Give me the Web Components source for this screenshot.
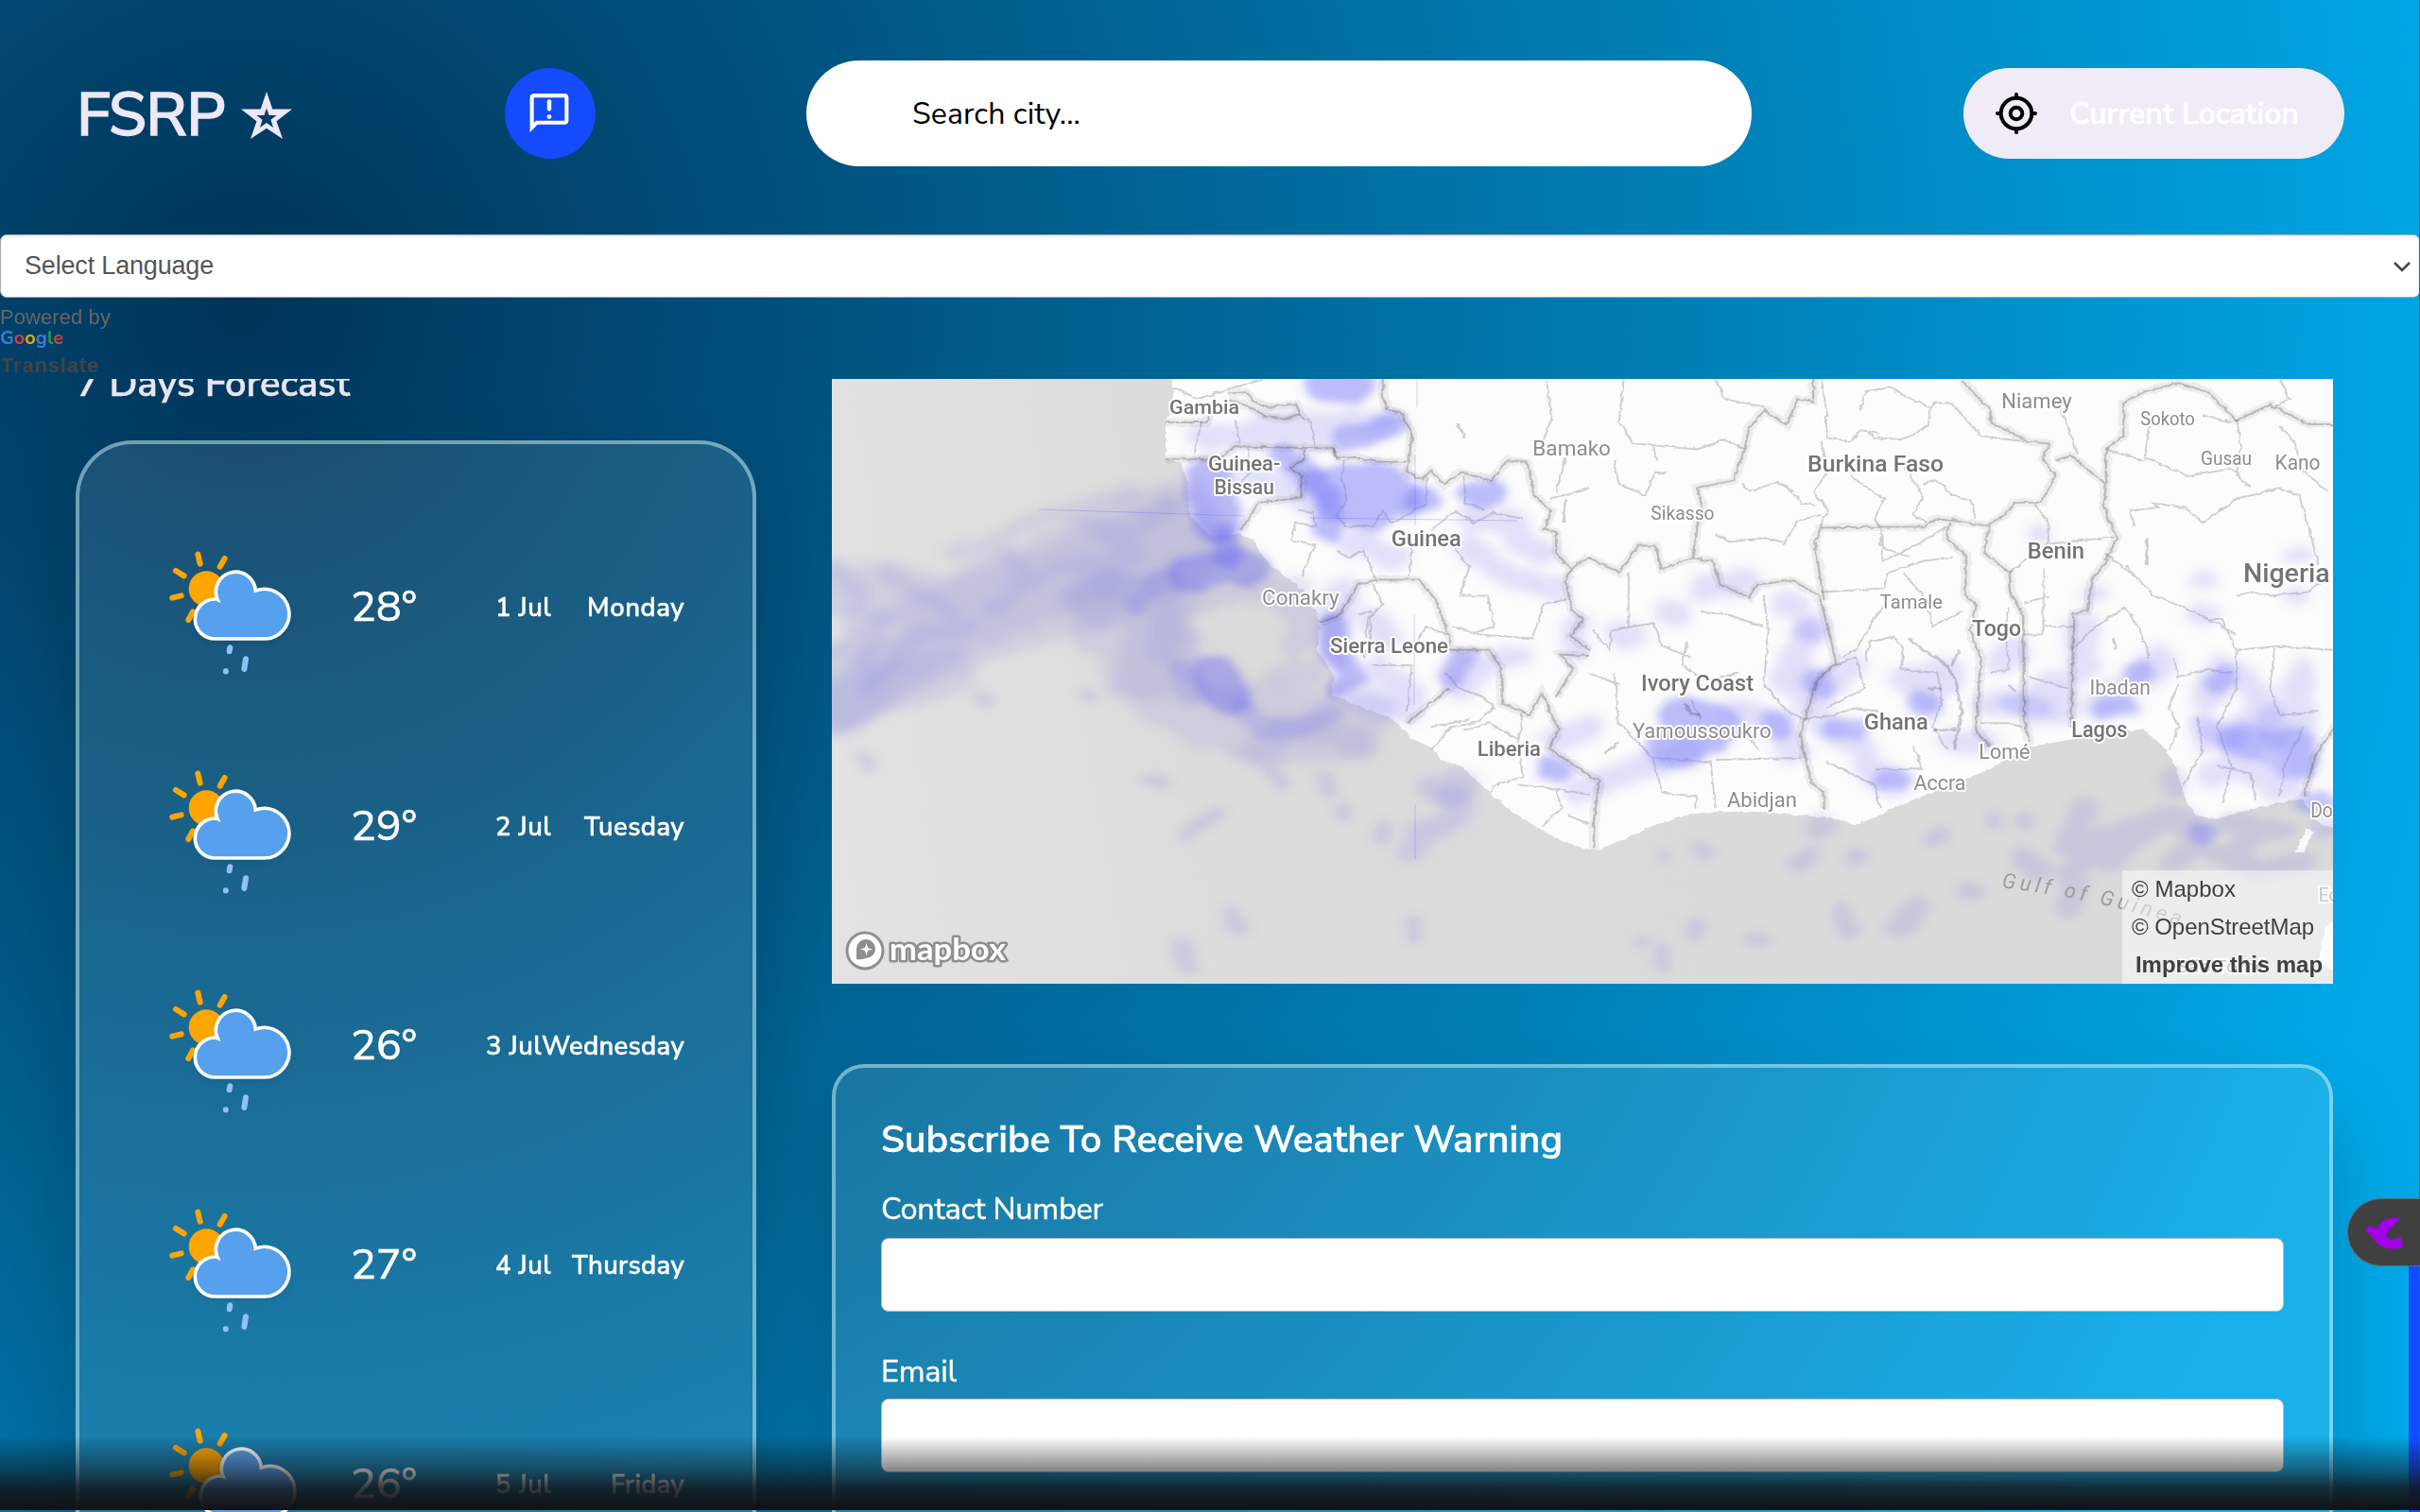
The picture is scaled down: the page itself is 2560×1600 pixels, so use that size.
<!DOCTYPE html>
<html lang="en">
<head>
<meta charset="utf-8">
<title>FSRP Weather</title>
<style>
html,body{margin:0;height:1600px;overflow:hidden}
body{font-family:"Nunito Sans",Nunito,Lato,sans-serif;color:#fff}
</style>
</head>
<body>
<weather-app></weather-app>
<script>
const define=(name,html,setup)=>customElements.define(name,class extends HTMLElement{
  constructor(){super();this.attachShadow({mode:'open'});}
  connectedCallback(){this.shadowRoot.innerHTML=typeof html==='function'?html(this):html;if(setup)setup(this);}
});

/* One line of text tracked out (or in) to a set width */
define('fit-text','<style>:host{display:inline-block;white-space:nowrap}span{display:inline-block}</style><span><slot></slot></span>',el=>{
  const w=+el.getAttribute('w'),s=el.shadowRoot.querySelector('span');
  const n=el.textContent.length,cur=s.getBoundingClientRect().width;
  if(cur)s.style.letterSpacing=((w-cur)/n)+'px';
  el.style.width=w+'px';
});

define('weather-icon',el=>`<style>:host{display:block;width:150px;height:160px}svg{display:block;overflow:visible}</style>
<svg width="150" height="160" viewBox="0 0 450 480">
<g stroke="orange" stroke-width="18" stroke-linecap="round"><path d="M118 50L125 80M203 63L188 89M48 102L74 118M37 188L65 181M102 232L88 258"/></g>
<circle cx="145" cy="159" r="56" fill="orange"/>
<g style="filter:drop-shadow(0 9px 9px rgba(0,0,0,.07))" transform="translate(${el.getAttribute('shift')||0} 0)">
<path d="M172 318A63 63 0 0 1 172 192Q176 191 180 193A63 63 0 1 1 301 165A79 79 0 1 1 330 318Z" fill="#57a0ee" stroke="#fff" stroke-width="11"/></g>
<g stroke="#91c0f8" stroke-width="18" stroke-linecap="round" fill="none"><path d="M220 346L218 358M270 382L265 414M206.500 420.500V421.500"/></g>
</svg>`);

define('forecast-row',el=>`<style>
:host{display:flex;align-items:center;height:232px;position:relative;color:#fff}
.ic{width:286px;flex:none;padding-left:86px;box-sizing:border-box;padding-top:14px}
.t{width:142px;font-size:45px;line-height:60px;margin-left:1px;-webkit-text-stroke:.6px #fff}
.d{font-size:27.500px;font-weight:600;width:68px;display:flex;justify-content:flex-end;margin-left:2px;-webkit-text-stroke:.4px #fff}
.day{font-size:27.500px;font-weight:600;display:flex;justify-content:flex-end;flex:1;padding-right:72px;-webkit-text-stroke:.4px #fff}
</style><div class="ic"><weather-icon shift="${el.getAttribute('shift')||0}"></weather-icon></div>
<div class="t"><fit-text w="70">${el.getAttribute('temp')}</fit-text></div>
<div class="d"><fit-text w="59">${el.getAttribute('date')}</fit-text></div>
<div class="day"><fit-text w="${el.getAttribute('w')}">${el.getAttribute('day')}</fit-text></div>`);

define('glass-card',`<style>:host{display:block;box-sizing:border-box;border:4px solid rgba(224,255,255,.45);background:rgba(255,255,255,.1);box-shadow:0 50px 90px rgba(0,0,0,.2)}</style><slot></slot>`);

define('app-header',`<style>
:host{display:flex;height:248px;position:relative;box-sizing:border-box;padding:64px 80px 0 81px}
.brand{display:flex;width:453px;height:112px;align-items:center;font-size:65px;color:#ece8f5;font-weight:500;line-height:80px}
.brand fit-text{padding-top:4px;-webkit-text-stroke:1.400px #ece8f5}
.brand svg{margin-left:17px;margin-top:3px}
.msg{width:96px;height:96px;border-radius:50%;background:#144bff;margin:8px 223px 0 0;display:flex;align-items:center;justify-content:center}
.msg svg{margin:0 2px 2px 0}
.search{width:888px;height:112px;border-radius:56px;background:#fff;color:#000;display:flex;align-items:center;padding-left:112px;font-size:32px}
.loc{width:403px;height:96px;border-radius:48px;background:#f0ecf7;margin:8px 0 0 auto;display:flex;align-items:center;font-size:32px;font-weight:600;-webkit-text-stroke:.4px #fff}
.loc svg{margin:0 33px 0 33px}
</style>
<div class="brand"><fit-text w="157">FSRP</fit-text><svg width="54" height="50" viewBox="0 0 54 50"><path fill="#ece8f5" fill-rule="evenodd" d="M27 0L33.300 18.600H54L37.500 31.200L44 50L27 38.800L10 50L16.500 31.200L0 18.600H20.700ZM27 17.500L24.500 25H16.500L22.500 29.800L20 38L27 33L34 38L31.500 29.800L37.500 25H29.500Z"/></svg></div>
<div class="msg"><svg width="50" height="49" viewBox="0 0 24 24" fill="#fff"><path d="M20 2H4c-1.100 0-1.990.9-1.990 2L2 22l4-4h14c1.100 0 2-.9 2-2V4c0-1.100-.9-2-2-2zm0 14H5.170l-.59.59-.58.58V4h16v12z"/><rect x="10.900" y="5" width="2.200" height="6" rx="1"/><circle cx="12" cy="14" r="1.200"/></svg></div>
<div class="search"><fit-text w="178">Search city...</fit-text></div>
<div class="loc"><svg width="46" height="46" viewBox="0 0 46 46" fill="none" stroke="#000" stroke-width="4" stroke-linecap="round"><circle cx="23" cy="23" r="16.300"/><circle cx="23" cy="23" r="6.300"/><path d="M23 3V6M23 40V43M3 23H6M40 23H43"/></svg><fit-text w="243">Current Location</fit-text></div>`);

define('language-picker',`<style>
:host{display:block;height:153px;font-family:"Liberation Sans",sans-serif}
.sel{height:67px;box-sizing:border-box;border:1px solid #aaa;border-radius:7px;background:#fff;color:#555;font-size:27px;display:flex;align-items:center;justify-content:space-between;padding:0 8px 0 25px;box-shadow:inset 0 2px 2px rgba(0,0,0,.07)}
.p{font-size:22px;line-height:24px;padding-top:9px;color:#666;height:23px}
.g{font-family:Nunito,Lato,sans-serif;font-weight:700;font-size:20px;line-height:22px;height:26px;display:flex;opacity:.85}
.t{font-size:22px;font-weight:700;color:#444;line-height:24px;padding:2px 0 0 1px}
</style><div class="sel"><fit-text w="200">Select Language</fit-text><svg width="20" height="14" viewBox="0 0 20 14"><path d="M2 3L10 11L18 3" fill="none" stroke="#444" stroke-width="2.600"/></svg></div>
<div class="p"><fit-text w="117">Powered by</fit-text></div>
<div class="g"><span style="color:#4285f4">G</span><span style="color:#ea4335">o</span><span style="color:#fbbc05">o</span><span style="color:#4285f4">g</span><span style="color:#34a853">l</span><span style="color:#ea4335">e</span></div>
<div class="t"><fit-text w="104">Translate</fit-text></div>`);

const LABELS=[
['Gambia',700,845,92,21,500],['Guinea-',780,930,240,22,500],['Bissau',793,917,301,22,500],['Guinea',1160,1305,435,24,500],['Conakry',892,1052,588,22,400],['Sierra Leone',1033,1278,712,22,500],['Liberia',1338,1470,980,22,500],['Bamako',1453,1615,202,22,400],
['Niamey',2425,2571,78,22,400],['Sokoto',2713,2826,122,20,400],['Burkina Faso',2023,2305,243,24,500],['Gusau',2838,2944,225,20,400],['Kano',2992,3086,237,22,400],['Sikasso',1698,1830,368,21,400],['Benin',2479,2597,468,23,500],['Nigeria',2926,3106,528,28,500],['Tamale',2173,2303,597,21,400],['Togo',2364,2466,668,23,500],['Ivory Coast',1678,1911,810,23,500],['Ibadan',2608,2734,820,22,400],['Yamoussoukro',1660,1948,933,22,400],['Ghana',2140,2273,912,23,500],['Lagos',2570,2686,932,23,500],['Lomé',2378,2484,988,22,400],['Accra',2243,2351,1068,22,400],['Abidjan',1856,2001,1112,22,400],['Do',3066,3112,1140,22,400],['Ec',3082,3124,1358,21,400],['São Tomé',2788,2973,1540,19,400]];
const K=800/1568,V=640/1568;
const labels=()=>LABELS.map(([t,a,b,y,s,w])=>`<text x="${(a*K).toFixed(1)}" y="${(y*V-1).toFixed(1)}" textLength="${((b-a)*K).toFixed(1)}" lengthAdjust="spacingAndGlyphs" font-size="${s}" font-weight="${w}" fill="${w>400?'#747474':'#8d8d8d'}">${t}</text>`).join('');

define('rain-map',`<style>
:host{display:block;width:1588px;height:640px;position:relative;overflow:hidden;background:linear-gradient(80deg,#e3e3e3,#dcdcdc 25%,#d9d9d9)}
svg{display:block}
.adm{fill:none;stroke:#d0d0d0;stroke-width:2}.adm path{vector-effect:non-scaling-stroke}
.hl{fill:none;stroke:#ececec}.bd{fill:none;stroke:#bcbcbc}
.lb text{font-family:Roboto,sans-serif;paint-order:stroke;stroke:#fff;stroke-width:4px;stroke-linejoin:round}
.rain{fill:none;stroke-linecap:round;stroke-linejoin:round}
.attr{position:absolute;right:0;bottom:0;width:223px;height:120px;box-sizing:border-box;background:rgba(255,255,255,.5);font:24px/40px "Liberation Sans",sans-serif;color:#404040;padding-left:10px}
.attr div{height:40px}.attr .b{font-weight:700;padding-left:4px}
</style>
<svg width="1588" height="640" viewBox="0 0 1588 640"><defs>
<filter id="w" x="0" y="0" width="100%" height="100%"><feTurbulence type="fractalNoise" baseFrequency=".06" numOctaves="3" seed="4"/><feDisplacementMap in="SourceGraphic" scale="10" xChannelSelector="R" yChannelSelector="G"/></filter>
<filter id="b" x="-5%" y="-5%" width="110%" height="110%"><feTurbulence type="fractalNoise" baseFrequency=".022" numOctaves="2" seed="8" result="n"/><feDisplacementMap in="SourceGraphic" in2="n" scale="30" xChannelSelector="R" yChannelSelector="G"/><feGaussianBlur stdDeviation="10"/></filter>
<filter id="c" x="-5%" y="-5%" width="110%" height="110%"><feTurbulence type="fractalNoise" baseFrequency=".022" numOctaves="2" seed="3" result="n"/><feDisplacementMap in="SourceGraphic" in2="n" scale="38" xChannelSelector="R" yChannelSelector="G"/><feGaussianBlur stdDeviation="13"/></filter>
<path id="coast" d="M697 -20L708 30L700 80L690 110V205L720 215L735 260L740 350L780 405L840 400L870 410L885 445L905 478L940 510L975 545L985 580L1005 600L1010 640L1003 700L1025 735L1040 775L1035 815L1070 835L1120 860L1160 880L1200 930L1245 955L1260 985L1305 1003L1345 1050L1395 1108L1460 1160L1510 1195L1568 1217L1590 1217L1633 1195L1683 1165L1753 1132L1818 1120L1938 1120L2018 1130L2088 1140L2116 1156L2158 1135L2208 1105L2268 1075L2338 1040L2398 1010L2478 952L2568 932L2658 912L2718 905L2758 950L2783 1000L2803 1080L2828 1130L2868 1138L2938 1115L3018 1090L3050 1088L3068 1130L3085 1150L3150 1175V-20Z"/>
<path id="border" d="M820 35L855 32L880 60L905 70L960 62L970 90L940 102L900 95L860 68L822 50M690 110H775L782 80M690 205L720 205H800L835 172L1035 178L1050 203L1085 200L1125 212H1195L1200 140L1180 88L1150 75L1140 40L1143 -10M845 390L885 318L970 305L975 250L950 230L978 200V178M1195 212L1190 240L1222 258L1240 235L1268 272L1300 240L1365 260L1400 208L1440 215L1455 300L1490 340L1475 385L1500 395V450L1530 490L1568 460M1530 490L1520 525L1532 595L1555 620L1530 665L1568 700M1010 630L1050 610L1090 530L1125 518H1215L1250 570L1278 665L1278 700M1190 890L1278 800M1278 700L1360 700L1385 745L1388 840L1445 868L1470 812L1505 905L1485 955L1568 1025L1590 1040L1578 1140L1578 1215M1500 820L1535 750L1510 712L1568 715M1568 460L1630 500L1670 430L1705 430L1718 490L1783 462L1790 385L1805 340L1792 280L1868 260L1890 180L1900 125L1930 78L1978 115L2000 50L2033 55V-10M1783 462L1825 470L1840 530L1900 565L1918 530L1990 520L2045 560L2063 640L2080 735L2040 780L2005 920L2030 1045L2055 1070V1112M2055 570L2035 420L2048 383L2265 380L2290 360L2395 378L2430 350L2450 318L2505 318L2535 250L2510 205L2520 165L2480 160L2400 110V80L2340 0M2315 370L2308 410L2350 455L2348 560L2370 580L2358 650L2380 720L2370 910L2400 950M2398 378L2388 450L2440 500L2442 550L2468 610L2470 880L2482 945M2535 210L2565 195L2640 270L2635 330L2662 410L2640 470L2610 520L2600 600L2572 605L2568 900M2640 270L2640 180L2676 145V60L2720 30L2790 8L2850 30L2910 105L2980 65L3060 115H3130M2320 360L2345 370M3125 880L3075 970L3050 1080"/>
</defs>
<g transform="translate(1 1) scale(${K} ${V})"><g filter="url(#w)"><use href="#coast" fill="#fcfcfc"/>
<g fill="#fcfcfc"><path d="M3055 1165L3070 1170L3050 1225L3032 1225ZM3095 1420L3130 1380V1540L3080 1510Z"/></g>
<g class="adm"><path d="M708 20L755 50L830 20L890 0M765 105L750 190M835 105L842 165M970 90L990 110L1000 170M1035 178L1050 210M860 175L865 240L830 290M1060 210L1055 250L1065 310L1045 350L1060 380H1120L1140 340L1160 370L1180 360M1180 360L1230 320V250M1310 250V320L1350 335M965 340L995 345L1000 380L960 370L950 415L1000 430L970 510M1045 445L1070 460L1100 440L1125 515M1180 390L1200 440L1195 510M1240 390L1290 340L1330 370L1370 345L1430 360M1290 440L1320 485L1300 560L1360 560L1370 640L1330 655M1285 640L1340 660L1450 670L1475 580L1520 570M1090 610L1115 600V680L1100 720M1120 530L1140 580L1110 620L1105 670M1115 740L1200 740L1190 860M1205 690L1230 640L1275 660M1270 760L1300 800L1345 820L1370 850L1330 890L1280 900L1240 960M1310 910L1360 890L1420 930L1430 1030L1370 1050L1365 1070M1240 900L1320 880M1420 1050L1500 1060L1510 1110L1470 1160M1430 860L1420 950M1500 1060L1568 1075M1525 1130L1568 1150M1480 0L1490 100L1470 170V190M1520 200L1500 290M1485 310L1568 280M1640 0L1630 110L1660 165L1790 180L1850 155L1890 180M1830 0L1850 50L1930 70M1620 210L1630 270L1685 300L1705 240L1730 240M1700 175L1710 210M2050 0L2060 80L2060 150L2110 160L2130 130L2170 140M2130 80L2140 30L2190 20L2270 70L2290 60M2140 130L2160 150L2220 155L2270 120L2280 60L2320 60L2380 145L2470 160M2050 160L2060 240L2035 290L2065 340L2045 380M2110 250L2180 310L2160 360L2175 390L2170 430L2230 460M2220 220L2260 300L2240 350L2270 370M2260 270L2290 260L2320 300L2360 310L2370 360M1885 270L1900 290L1960 265L1990 290L2010 320L2040 325M1830 400L1860 420L1930 410L1970 420M1970 430L2000 365L2050 350M2050 550L2180 540L2190 500L2260 470L2320 460M2175 400L2175 470L2230 440L2310 380M2180 580L2120 700L2090 720M2140 730L2150 680L2200 665L2220 700L2215 750L2290 760L2300 830L2280 900L2310 960M2220 500L2260 560L2280 640L2340 600M2490 320L2520 370L2520 420L2440 500M2520 425L2655 408M2510 490L2510 660L2470 660M2520 560L2470 580M2510 640L2570 640M2440 590L2430 650L2440 750L2400 760M2380 890L2440 890L2465 900M2480 770L2560 800M2570 700L2600 660L2640 620L2680 590L2710 650L2730 720M2680 480L2740 560L2800 590L2870 630L2910 660M2910 560L2940 550L2980 560L3060 550L3090 520M2850 620L2880 620L2910 700L3000 690L3110 700M2910 700V800L2870 900L2900 1000L2880 1100M2990 690L2980 800L3000 870L3080 860M2780 720L2790 770L2850 750L2900 760M2790 790L2770 850L2790 900L2770 960M2830 870L2840 960L2800 1050M2870 1000L2940 1020L2950 1090M3050 900L3010 1000L3000 1080M2700 380L2690 340L2750 330L2740 320L2800 330L2840 370L2910 310L3000 280L3040 300L3060 380L3080 480M2640 450L2700 510M2730 120L2720 200L2810 250L2900 230L2940 280M2910 100L2920 170L2910 250M2840 90L2900 110M3000 120L3030 160L3050 240L3100 290M3000 0L3020 50L2990 70M2540 60L2560 120L2580 190M2640 180L2720 210M1575 650L1610 700L1615 650L1700 630L1720 690L1780 720M1650 500L1650 640M1800 600L1860 610L1930 640M1930 560L1940 650L1930 790L1980 860L2010 880M1770 680L1760 740L1810 780L1880 760M1620 760L1630 890L1700 980L1820 990L1830 1110M1700 980L1720 1070L1790 1080V1110M1830 985L2010 980M1880 900L1920 960M1568 760L1630 790M1780 830L1800 880M2080 740L2120 720L2140 800L2060 850M2010 880L2070 870L2120 850L2170 860M2060 990L2110 1020L2160 1050L2170 1110M2160 1010L2260 1010L2240 950"/></g></g></g>
<g transform="translate(1 1) scale(${K} ${V})">
<g filter="url(#c)" class="rain">
<g stroke="#9290de" stroke-opacity=".2"><path stroke-width="150" d="M0 540L120 550L220 590L350 520L480 460L600 390L720 330L760 430L640 520L480 590L320 650L170 720L20 820"/><path stroke-width="190" d="M0 830L100 720L240 620L420 540L580 460L700 400"/><path stroke-width="120" d="M0 860L100 800L240 760"/><path stroke-width="190" d="M580 630L620 600L670 700L650 740"/><path stroke-width="150" d="M560 570L690 570L660 790L780 880L900 930L1060 910L1090 860L1000 880L880 860"/><path stroke-width="70" d="M690 700L700 600L800 550L960 540L990 640L960 690M880 960L960 900L1100 940M980 760L920 770M900 540L980 600"/></g>
<g stroke="#7a78e6" stroke-opacity=".15"><path stroke-width="42" d="M250 450L340 420L430 360L620 290M330 590L460 490L640 450M10 500L60 560L40 650L10 700M110 500L240 600M70 800L180 660L290 640M350 440L400 500L350 590M560 400L620 440L560 540M500 360L620 400L700 320M100 610L60 740M480 560L560 490"/></g>
<g stroke="#8a8af5" stroke-opacity=".25"><path stroke-width="62" d="M760 150L960 140L1000 160M900 110H1140M870 250L1000 320M1080 420L1160 460M1320 360L1420 370M1320 430L1400 510L1500 540M1420 420L1480 450M1120 620L1150 680M1060 540L1040 720M1130 740L1200 820M1100 840L1190 860M1300 800L1350 740M1400 720H1420M1500 930L1568 900M1540 640V700M1540 1070L1580 1050L1690 1000L1780 960M1240 1060L1300 1040L1300 1130L1220 1180L1200 1220"/><path stroke-width="66" d="M1810 540L1890 520M1740 600L1750 610M1640 660H1650M1980 580L1990 590M2030 640L2000 720L1970 780M2060 790L2110 740M1880 860L1960 900L1990 960M2020 790L2030 850M2060 900L2130 950L2140 1000L2200 1050M2220 780L2320 750L2260 850M2400 840L2470 840L2540 780L2550 860L2500 870M2420 730L2450 700M2590 640V750M2620 850L2740 750L2750 720M2850 830L2880 750L2930 780M2850 930L3010 860L3020 940M2860 1030L2900 990L3000 1060M2990 1060H3010M2930 970L2960 820M2320 940L2380 940M3050 1010L3040 860M3050 750L3040 800"/><path stroke-width="48" d="M3030 450H3050M3030 560H3040M2830 610H2850M2500 400V405M2620 550V560M2840 520V522"/></g>
</g>
<g filter="url(#b)" class="rain">
<g stroke="#6c6aee" stroke-opacity=".46"><path stroke-width="96" d="M780 250L795 375M740 505L830 480L860 490M790 760L820 820"/><path stroke-width="52" d="M815 400L820 460M1040 630L1035 700L1085 770L1045 800M1285 770L1305 720"/></g>
<g stroke="#6c6aee" stroke-opacity=".24"><path stroke-width="52" d="M715 750L750 820M630 580L690 510M850 850L890 900L970 905L1040 860"/></g>
<g stroke="#7b7bfa" stroke-opacity=".5"><path stroke-width="90" d="M1020 15H1080M1020 270L1140 260L1180 310L1050 320L1120 350M1030 280L1060 320"/><path stroke-width="62" d="M1060 155L1160 115M935 195L990 250M1030 300V390M1210 310H1230M1330 295H1365M1490 1010L1505 1015"/><path stroke-width="120" d="M1770 880L1820 900L1750 950"/></g>
<g stroke="#7b7bfa" stroke-opacity=".42"><path stroke-width="54" d="M2075 905H2120M2255 830L2270 840M2705 765L2720 755M2640 850L2680 845M2180 1035H2210M2870 790L2885 770M2840 1180L2845 1170M3060 1095H3085M1955 880L1965 910M2035 780L2050 800"/><path stroke-width="84" d="M2920 930L2990 960L3040 990M3035 940L3025 990"/></g>
<g stroke="#7b7bfa" stroke-opacity=".25"><path stroke-width="54" d="M2020 650H2030M2500 850L2450 840M2840 890L2900 930M2980 870L2990 930"/></g>
<g stroke="#8180e6" stroke-opacity=".2"><path stroke-width="38" d="M70 980L75 990M312 825V828M530 815V820M655 1040H685M910 1010L930 1040M1020 1030L1030 1070M1140 1160V1185M1055 1115V1120M735 1180L790 1125M820 1380L845 1425M720 1465L740 1520M1205 1410V1440M1800 1210L1810 1230M2000 1260L2030 1220M2270 1200L2300 1175M2120 1240L2130 1235M1725 1235V1240M1790 1410V1440M1910 1450H1925M1720 1480V1520M1675 1455V1460M2350 1325H2370M2470 1140L2480 1150M2410 1140V1150"/><path stroke-width="56" d="M2095 1385L2105 1420M2210 1420L2245 1365M2050 1150V1165M1270 1080H1290M2555 1210L2600 1110M2560 1280L2640 1180L2780 1130M2650 1250L2700 1180L2800 1130L2830 1200L2780 1250M2560 1370L2580 1310M2870 1230L2960 1270L3050 1250M2900 1240L2960 1160M2640 1220L2690 1170M2470 1240L2500 1270M2780 1030V1060M2900 1150L3000 1170M3090 1160H3120"/></g>
</g></g>
<g stroke="#6664e8" stroke-opacity=".3" stroke-width="1"><path d="M219 138L437 145M505 147L725 150M617 80V155M619 0V30M616 250V345M617 450V508"/></g>
<g transform="translate(1 1) scale(${K} ${V})" filter="url(#w)" style="mix-blend-mode:multiply"><g class="hl" stroke-opacity=".8"><use href="#border" stroke-width="21"/></g><g class="bd"><use href="#border" stroke-width="4.800"/></g>
<g fill="none" stroke="#cfcfcf" stroke-width="6"><path d="M2230 670L2260 700L2310 740L2330 790L2340 860L2325 960M2320 740L2335 700M2300 800L2270 800M2330 905L2280 910M1765 840L1780 865L1800 870M2725 410V480M1295 110L1310 150M1520 310L1515 370M2440 790L2450 810M1600 970L1630 940M2655 670L2660 700"/></g></g>
<g class="lb">${labels()}
<path id="gg" d="M1237 538Q1345 551 1436 582" fill="none"/>
<text font-size="22" font-style="italic" fill="#9c9c9c" style="stroke:none" letter-spacing="4.400"><textPath href="#gg">Gulf of Guinea</textPath></text></g>
<g><circle cx="35" cy="605" r="19" fill="#fff" stroke="#8f8f8f" stroke-width="3"/><path d="M26 614V603A10 10 0 1 1 36 613Q31 615 26 614Z" fill="#8f8f8f"/><path d="M36.500 597L38 602L43 603.500L38 605L36.500 610L35 605L30 603.500L35 602Z" fill="#fff"/>
<text x="61" y="615" font-family="Lato,sans-serif" font-weight="700" font-size="32" textLength="123" lengthAdjust="spacingAndGlyphs" fill="#fff" stroke="#8f8f8f" stroke-width="5" stroke-linejoin="round" paint-order="stroke">mapbox</text></g>
</svg>
<div class="attr"><div><fit-text w="110">© Mapbox</fit-text></div><div><fit-text w="193">© OpenStreetMap</fit-text></div><div class="b"><fit-text w="198">Improve this map</fit-text></div></div>`);

define('subscribe-form',`<style>
:host{display:block;padding:48px 48px 0;height:500px;box-sizing:border-box}
h2{margin:0;font-size:40px;line-height:56px;font-weight:600;-webkit-text-stroke:.5px #fff}
label{display:block;font-size:32.500px;line-height:42px;padding-top:24px;height:76px;box-sizing:border-box;-webkit-text-stroke:.4px #fff}
.f{height:78px;box-sizing:border-box;background:#fff;border:1px solid #bbb;border-radius:8px}
.f+label{margin-top:16px;padding-top:26px}
</style><h2><fit-text w="721">Subscribe To Receive Weather Warning</fit-text></h2>
<label><fit-text w="235">Contact Number</fit-text></label><div class="f"></div>
<label><fit-text w="80">Email</fit-text></label><div class="f"></div>`);

define('weather-app',`<style>
:host{display:block;position:relative;width:2560px;height:1600px;overflow:hidden;background:radial-gradient(circle at 10% 20%,rgb(0,52,89) 0%,rgb(0,168,232) 90%)}
main{height:1199px;overflow:hidden;display:flex;gap:80px;padding-left:80px}
.left{width:720px;flex:none}.right{width:1588px;flex:none}
h1{margin:-22px 0 0 1px;height:87px;font-size:40px;line-height:54px;font-weight:600;color:#e9e5f2;-webkit-text-stroke:.5px #e9e5f2}
.fc{height:1300px;border-radius:60px 60px 0 0;padding-top:57px}
.sub{margin-top:85px;border-radius:34px 34px 0 0}
.bar{position:absolute;right:1px;top:1340px;width:11px;height:260px;background:#144bff}
.tab{position:absolute;right:0;top:1268px;width:77px;height:72px;box-sizing:border-box;border:1px solid #666;border-right:0;background:#404040;border-radius:36px 0 0 36px}
.fade{position:absolute;left:0;right:0;top:1520px;height:78px;background:linear-gradient(rgba(17,17,19,0),rgba(17,17,19,.52) 48%,rgba(17,17,19,.83) 70%,#111113)}
.edge{position:absolute;right:0;top:0;width:1px;height:1600px;background:#0070a8}
</style>
<app-header></app-header><language-picker></language-picker>
<main><div class="left"><h1><fit-text w="289">7 Days Forecast</fit-text></h1>
<glass-card class="fc"><forecast-row temp="28°" date="1 Jul" day="Monday" w="103"></forecast-row><forecast-row temp="29°" date="2 Jul" day="Tuesday" w="106"></forecast-row><forecast-row temp="26°" date="3 Jul" day="Wednesday" w="151"></forecast-row><forecast-row temp="27°" date="4 Jul" day="Thursday" w="119"></forecast-row><forecast-row temp="26°" date="5 Jul" day="Friday" w="78" shift="18"></forecast-row></glass-card></div>
<div class="right"><rain-map></rain-map><glass-card class="sub"><subscribe-form></subscribe-form></glass-card></div></main>
<div class="edge"></div><div class="bar"></div>
<div class="tab"><svg width="77" height="72" viewBox="0 0 77 72"><path fill="#a200e8" d="M18 33C19 28 25 27 30 32C34 22 44 18 56 20C49 26 42 33 41 37C40 45 50 43 57 39C56 43 57 47 58 51C50 53 37 54 30 46C25 40 24 37 18 33Z"/></svg></div>
<div class="fade"></div>`);
</script>
</body>
</html>
